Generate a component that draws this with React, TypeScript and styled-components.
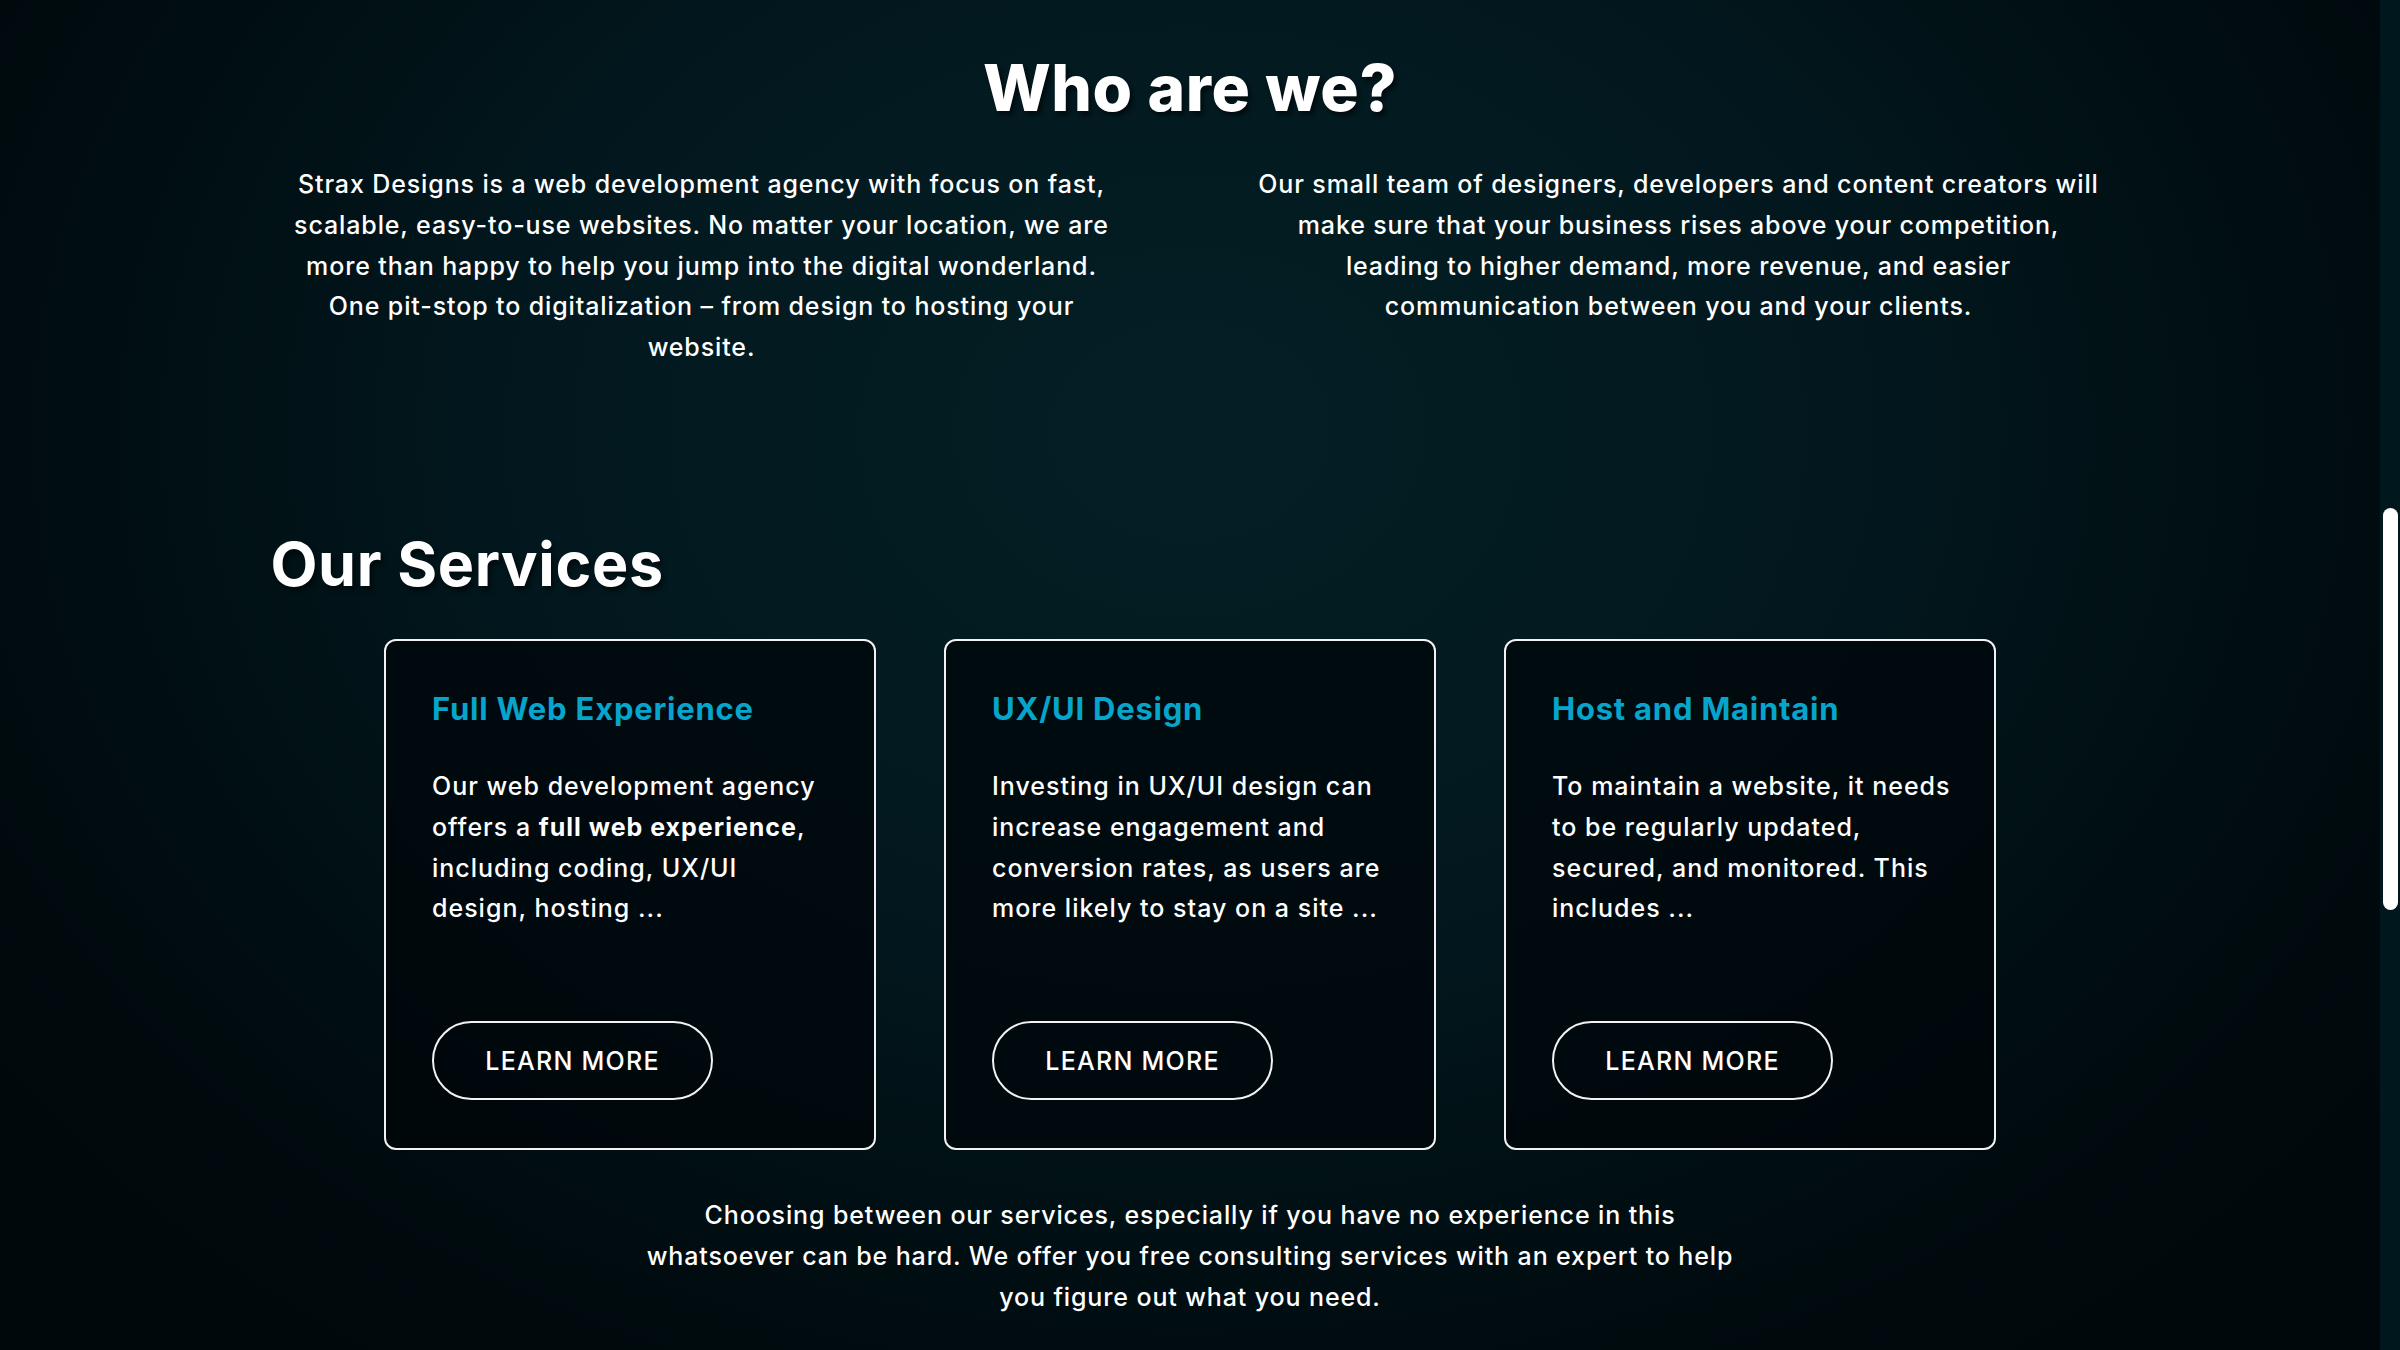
import React from "react";
import styled, { createGlobalStyle } from "styled-components";

const GlobalStyle = createGlobalStyle`
  html, body {
    margin: 0;
    padding: 0;
    overflow: hidden;
    background: #000a0d;
  }
  * { box-sizing: border-box; }
`;

const Frame = styled.div`
  display: flex;
  width: 2400px;
  height: 1350px;
  font-family: Inter, "Open Sans", "Liberation Sans", sans-serif;
  color: #ffffff;
`;

const Main = styled.main`
  flex: 1;
  display: flex;
  flex-direction: column;
  align-items: center;
  padding-top: 49px;
  background: radial-gradient(
    ellipse 62% 85% at 50% 32%,
    #031f25 0%,
    #02181e 45%,
    #000c10 80%,
    #00080b 100%
  );
`;

const Track = styled.div`
  width: 20px;
  background: #00181d;
  padding: 508px 2px 0 3px;
`;

const Thumb = styled.div`
  height: 402px;
  width: 15px;
  border-radius: 8px;
  background: #ffffff;
`;

const Title = styled.h2`
  margin: 0;
  font-size: 64px;
  line-height: 78px;
  font-weight: 800;
  letter-spacing: 0.01em;
  text-shadow: 3px 4px 4px rgba(0, 0, 0, 0.55);
`;

const Container = styled.div`
  width: 1839px;
`;

const AboutGrid = styled.div`
  display: grid;
  grid-template-columns: 1fr 1fr;
  column-gap: 115px;
  margin-top: 37px;
`;

const Text = styled.p<{ $align?: string }>`
  margin: 0;
  font-size: 25px;
  line-height: 40.8px;
  font-weight: 500;
  letter-spacing: 0.035em;
  text-align: ${(p) => p.$align || "left"};
`;

const Heading = styled.h2`
  margin: 157px 0 0 0;
  font-size: 61px;
  line-height: 78px;
  font-weight: 700;
  letter-spacing: 0.01em;
  text-shadow: 3px 4px 4px rgba(0, 0, 0, 0.5);
`;

const CardRow = styled.div`
  display: flex;
  justify-content: center;
  gap: 68px;
  margin-top: 36px;
`;

const Card = styled.article`
  width: 492px;
  display: flex;
  flex-direction: column;
  align-items: flex-start;
  padding: 50px 46px 48px 46px;
  border: 2px solid #f2f2f2;
  border-radius: 12px;
  background: rgba(0, 6, 10, 0.72);
`;

const CardTitle = styled.h3`
  margin: 0;
  font-size: 31px;
  line-height: 36px;
  font-weight: 700;
  color: #06a5cc;
  letter-spacing: 0.025em;
`;

const CardText = styled(Text)`
  margin-top: 39px;
  margin-bottom: 92px;
  letter-spacing: 0.04em;
  white-space: nowrap;
  b {
    font-weight: 700;
  }
`;

const LearnMore = styled.button`
  width: 281px;
  height: 79px;
  border: 2px solid #f2f2f2;
  border-radius: 40px;
  background: transparent;
  color: #ffffff;
  font-family: inherit;
  font-size: 25px;
  font-weight: 500;
  letter-spacing: 0.05em;
  cursor: pointer;
`;

const Footer = styled(Text)`
  margin-top: 45px;
  width: 1160px;
`;

const cards = [
  {
    title: "Full Web Experience",
    body: (
      <>
        Our web development agency
        <br />
        offers a <b>full web experience</b>,
        <br />
        including coding, UX/UI
        <br />
        design, hosting ...
      </>
    ),
  },
  {
    title: "UX/UI Design",
    body: (
      <>
        Investing in UX/UI design can
        <br />
        increase engagement and
        <br />
        conversion rates, as users are
        <br />
        more likely to stay on a site ...
      </>
    ),
  },
  {
    title: "Host and Maintain",
    body: (
      <>
        To maintain a website, it needs
        <br />
        to be regularly updated,
        <br />
        secured, and monitored. This
        <br />
        includes ...
      </>
    ),
  },
];

export default function App() {
  return (
    <>
      <GlobalStyle />
      <Frame>
        <Main>
          <Title>Who are we?</Title>
          <Container>
            <AboutGrid>
              <Text $align="center">
                Strax Designs is a web development agency with focus on fast,
                <br />
                scalable, easy-to-use websites. No matter your location, we are
                <br />
                more than happy to help you jump into the digital wonderland.
                <br />
                One pit-stop to digitalization – from design to hosting your
                <br />
                website.
              </Text>
              <Text $align="center">
                Our small team of designers, developers and content creators will
                <br />
                make sure that your business rises above your competition,
                <br />
                leading to higher demand, more revenue, and easier
                <br />
                communication between you and your clients.
              </Text>
            </AboutGrid>
            <Heading>Our Services</Heading>
          </Container>
          <CardRow>
            {cards.map((c) => (
              <Card key={c.title}>
                <CardTitle>{c.title}</CardTitle>
                <CardText>{c.body}</CardText>
                <LearnMore>LEARN MORE</LearnMore>
              </Card>
            ))}
          </CardRow>
          <Footer $align="center">
            Choosing between our services, especially if you have no experience in this
            <br />
            whatsoever can be hard. We offer you free consulting services with an expert to help
            <br />
            you figure out what you need.
          </Footer>
        </Main>
        <Track>
          <Thumb />
        </Track>
      </Frame>
    </>
  );
}
